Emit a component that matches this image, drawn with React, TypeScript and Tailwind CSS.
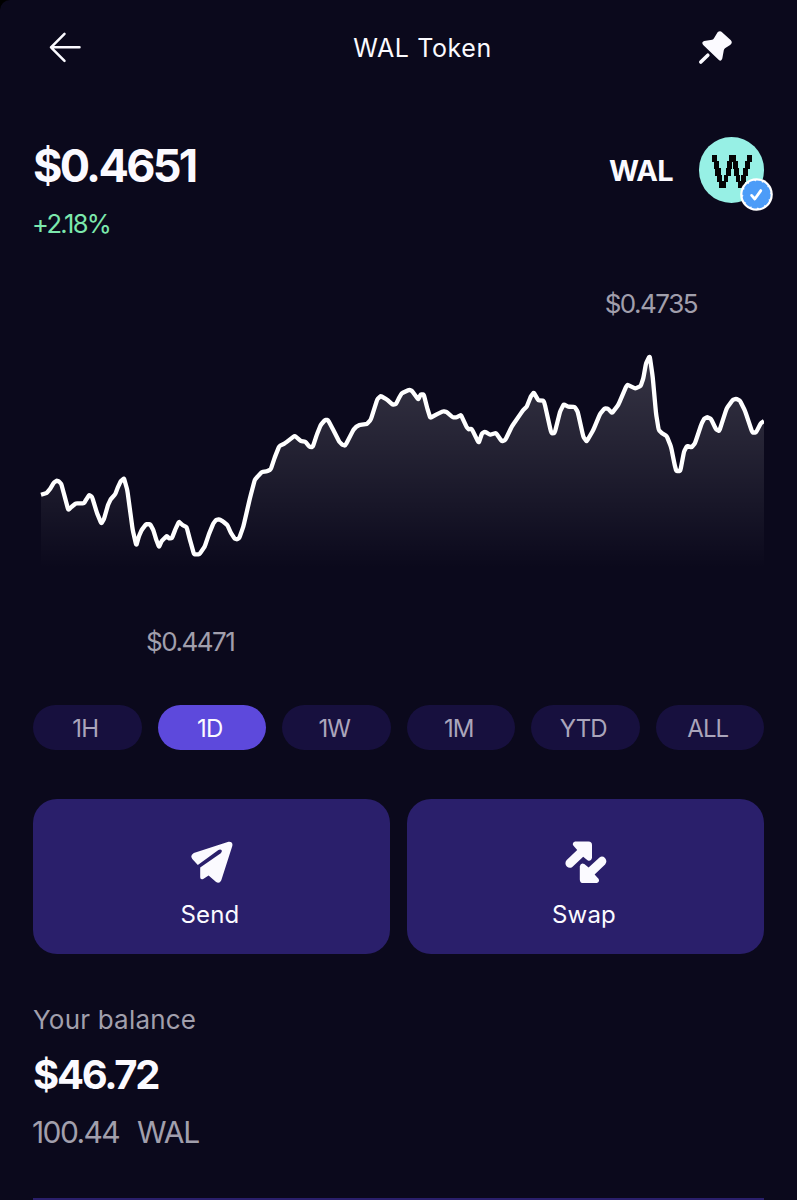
import { clsx } from "clsx";

type Point = [number, number];

const PRICES: Point[] = [
  [41, 494.7], [46.7, 493], [50, 489], [54, 482.5], [56.7, 480.7], [59, 481.5], [61.3, 484], [64, 494], [68.3, 510],
  [72, 506.5], [76, 503.3], [84, 503.3], [86.5, 499], [89.3, 495], [92, 496.7], [97, 513], [101.3, 523.5], [104, 519],
  [108, 505], [110.7, 499.3], [115.3, 494], [118, 487], [120.7, 481.3], [124, 478.3], [127.3, 490], [130, 510],
  [132.7, 530], [136.3, 545.5], [139, 536], [141.7, 530], [146, 524.3], [150, 524], [153.3, 530], [156, 539], [159, 547],
  [161.7, 541], [166.7, 536], [169.3, 538.5], [172, 538], [175.5, 529], [179, 521.7], [182.5, 525], [186.7, 527.3],
  [190, 540], [194, 554.3], [199.3, 554.3], [204.7, 546.7], [209, 534], [213.3, 523.5], [216, 520], [219.3, 519.3],
  [223, 521.5], [227.3, 525], [231, 533], [234.7, 538.7], [237, 539.3], [239.3, 538], [243.3, 526.7], [250, 498],
  [254.7, 480], [258, 476], [262, 472], [267, 471.3], [270.7, 469.5], [275, 456.7], [279.3, 446], [285, 443.3],
  [294.7, 435.7], [300.7, 441], [305.3, 441.7], [309.3, 446.7], [312.7, 447.3], [316.7, 435], [320.7, 425],
  [325, 420], [328, 420], [333.3, 430], [339.3, 441.7], [342, 444.5], [345.3, 445.7], [353.3, 430], [356, 427],
  [359.3, 425], [366.7, 424], [370.7, 420], [377.3, 399.3], [380.7, 396], [386.7, 399.3], [392.7, 404.7], [396, 404],
  [399, 398], [401.7, 393.3], [409.3, 389.7], [412, 391], [418.3, 399.5], [420.7, 394.3], [423.7, 394.3], [427.3, 408.3],
  [430.3, 418], [436.7, 414.3], [443.3, 411.2], [446.7, 412], [452.7, 417.3], [456.7, 417.3], [461, 415], [466.7, 427.3],
  [468.7, 429.3], [471.7, 428.7], [478.7, 443], [482, 433.3], [485, 431.7], [490, 434.7], [496, 433], [501.7, 441.3],
  [505.3, 440], [511.7, 426.7], [522.7, 410.7], [526.7, 406.7], [530.7, 396.7], [533.7, 392.5], [538.3, 400.3],
  [544, 400.7], [551.3, 433.5], [554.7, 433], [560, 411.7], [563.7, 404.3], [568.3, 406.7], [574.7, 407],
  [577.7, 411.7], [583.3, 436.7], [586.7, 441.5], [593.3, 430], [600, 414], [604.7, 408.3], [608, 408.7], [612, 413],
  [618.3, 405], [627, 384.5], [635.3, 388.5], [640.7, 386], [643.3, 378.3], [646, 363.3], [649.7, 356], [652.7, 376.7],
  [656, 413.3], [658.7, 430], [662, 433.3], [666.7, 436], [671, 446.7], [674.7, 465], [676.3, 471], [680.3, 471],
  [684, 451.7], [687, 446], [691.7, 447.3], [695, 443.3], [701.7, 423.3], [704, 419], [707.3, 417], [711, 419],
  [716, 429.3], [719.3, 431], [726.7, 408.3], [732.7, 400], [736, 398.7], [740, 400.7], [745, 410.7], [752.3, 432.5],
  [756, 432.5], [760.7, 423.3], [764, 421],
];

const RANGES = ["1H", "1D", "1W", "1M", "YTD", "ALL"];

// Rounds each corner slightly by curving through segment points near it.
function smoothPath(points: Point[]) {
  const cut = 0.15;
  let d = `M${points[0][0]} ${points[0][1]}`;
  for (let i = 1; i < points.length - 1; i++) {
    const [px, py] = points[i - 1];
    const [x, y] = points[i];
    const [nx, ny] = points[i + 1];
    d += `L${x + (px - x) * cut} ${y + (py - y) * cut}Q${x} ${y} ${x + (nx - x) * cut} ${y + (ny - y) * cut}`;
  }
  const [lx, ly] = points[points.length - 1];
  return `${d}L${lx} ${ly}`;
}

function PriceChart() {
  const line = smoothPath(PRICES);

  return (
    <svg className="block h-[240px] w-full" viewBox="33 340 731 240" fill="none">
      <defs>
        <linearGradient id="area" gradientUnits="userSpaceOnUse" x1="0" y1="356" x2="0" y2="568">
          <stop offset="0" stopColor="#fff" stopOpacity="0.18" />
          <stop offset="1" stopColor="#fff" stopOpacity="0" />
        </linearGradient>
      </defs>
      <path d={`${line}V568H41Z`} fill="url(#area)" />
      <path d={line} stroke="#fff" strokeWidth="4.3" strokeLinejoin="miter" />
    </svg>
  );
}

function BackIcon() {
  return (
    <svg className="h-8 w-8" viewBox="0 0 32 32" fill="none" stroke="#fbfaff" strokeWidth="2.5" strokeLinecap="round" strokeLinejoin="round">
      <path d="M30.5 15.3H2M15.5 1.8 2 15.3 15.5 28.8" />
    </svg>
  );
}

function PinIcon() {
  return (
    <svg className="h-9 w-9" viewBox="0 0 36 36" fill="#fbfaff">
      <path d="M19.6 2.2Q22 .2 24.3 2.4L32.6 10Q35.2 12.8 32.1 15L27 18.2Q26 19 25.8 20.2L24.3 28.5Q23.3 32 20.6 29.8L5.2 15.1Q3 12 6.2 10.9L14.2 9.8Q15.3 9.5 16 8.3Z" />
      <path d="m9.8 25.2-7 6.8" stroke="#fbfaff" strokeWidth="3.6" strokeLinecap="round" />
    </svg>
  );
}

function TokenLogo() {
  return (
    <div className="relative h-[66px] w-[65px] rounded-full bg-[#97f0e5]">
      {/* pixel-art mark, one row of blocks per line */}
      <svg className="h-full w-full" viewBox="699 137 65 66" fill="#050505" shapeRendering="crispEdges">
        <path d="M712 155h5v7h-5ZM729 155h7v7h-7ZM747 155h5v7h-5Z" />
        <path d="M714 161h5v8h-5ZM727 161h5v8h-5ZM733 161h5v8h-5ZM745 161h5v8h-5Z" />
        <path d="M715 168h6v8h-6ZM726 168h5v8h-5ZM734 168h5v8h-5ZM743 168h5v8h-5Z" />
        <path d="M717 175h5v7h-5ZM724 175h4v7h-4ZM736 175h4v7h-4ZM741 175h5v7h-5Z" />
        <path d="M719 181h7v7h-7ZM738 181h7v7h-7Z" />
      </svg>
      <svg className="absolute top-[41px] left-[41px] h-[33px] w-[33px]" viewBox="0 0 33 33" fill="none">
        <circle cx="16.5" cy="16.5" r="16.3" fill="#fff" />
        <circle cx="16.5" cy="16.5" r="12.8" fill="#4c9cf8" />
        <circle cx="16.5" cy="16.5" r="12.6" stroke="#4c9cf8" strokeWidth="3" strokeDasharray="3.6 3" strokeLinecap="round" />
        <path d="m11.6 17.4 3.2 3.6L20.8 12.6" stroke="#fff" strokeWidth="2.8" strokeLinecap="round" strokeLinejoin="round" />
      </svg>
    </div>
  );
}

function SendIcon() {
  return (
    <svg className="h-[42px] w-[42px]" viewBox="191 841 42 42" fill="#fbfaff">
      <path d="M228.5 841.7Q233.2 841.3 232.3 846L221.3 880.2Q219.3 884.3 215.8 881.8L208.6 875.4 203.2 879Q200.2 880 200.2 877.2V867.4L220.8 853.2Q222.8 850.8 221 849.8 220 849.2 218.4 850L197.8 865 192.3 859Q189.7 855.4 193.8 852.9Z" />
    </svg>
  );
}

function SwapIcon() {
  return (
    <svg className="h-[42px] w-[42px]" viewBox="565 841 42 42" fill="#fbfaff">
      <path d="M575 841.4H588.5Q592 841.4 592 845V858Q591 862 587.5 860.3L583.2 856.8 572.3 867Q569.5 868.9 566.8 866.5 564.1 863.2 566.7 860L577.2 850 573.3 845.6Q571.7 842.7 575 841.4Z" />
      <path d="M597 883H583.3Q579.8 883 579.8 879.4V866.3Q580.8 862.4 584.3 864.1L588.6 867.6 599.5 857.4Q602.3 855.5 605 857.9 607.7 861.2 605.1 864.4L594.6 874.4 598.5 878.8Q600.1 881.7 597 883Z" />
    </svg>
  );
}

export default function App() {
  return (
    <div className="h-[1200px] w-[797px] overflow-hidden bg-black font-['Inter',sans-serif] text-[#fbfaff]">
      <main className="flex h-full flex-col rounded-tl-[10px] bg-[#0b091c] px-[33px]">
        <header className="flex h-[95px] items-center justify-between pr-[30px] pl-4">
          <BackIcon />
          <h1 className="pt-px pl-[66px] text-[25px] leading-8 font-normal tracking-[0.6px]">WAL Token</h1>
          <PinIcon />
        </header>

        <section className="flex h-[150px] justify-between pt-[42px]">
          <div>
            <p className="text-[45px] leading-[58px] font-bold tracking-[-2.7px]">$0.4651</p>
            <p className="mt-[13px] -ml-px text-[25.5px] leading-8 font-normal tracking-[-1.6px] text-[#7ce8ad]">+2.18%</p>
          </div>
          <div className="flex h-[66px] items-center gap-[26px]">
            <span className="pt-px text-[29px] font-bold tracking-[-0.7px]">WAL</span>
            <TokenLogo />
          </div>
        </section>

        <section className="h-[460px] text-[26px] leading-8 font-normal tracking-[-1.5px] text-[#a19fac]">
          <p className="flex h-[95px] justify-end pt-[43px] pr-[67px]">$0.4735</p>
          <PriceChart />
          <p className="pt-[46px] pl-[113px]">$0.4471</p>
        </section>

        <nav className="flex gap-4">
          {RANGES.map((range) => (
            <button
              key={range}
              className={clsx(
                "flex h-[45px] flex-1 items-center justify-center rounded-full pt-[3px] pr-1 text-[24px] font-normal tracking-[-0.9px]",
                range === "1D" ? "bg-[#5d49dc] text-[#fbfaff]" : "bg-[#17103e] text-[#aaa5bb]",
              )}
            >
              {range}
            </button>
          ))}
        </nav>

        <div className="mt-[49px] flex gap-[17px] text-[24px] leading-8 font-normal tracking-[0.2px]">
          <button className="flex h-[155px] flex-1 flex-col items-center rounded-[24px] bg-[#2a1f6b] pt-[42px]">
            <SendIcon />
            <span className="mt-4 pr-[3px]">Send</span>
          </button>
          <button className="flex h-[155px] flex-1 flex-col items-center rounded-[24px] bg-[#2a1f6b] pt-[42px]">
            <SwapIcon />
            <span className="mt-4 pr-[3px]">Swap</span>
          </button>
        </div>

        <section className="mt-[50px] h-[194px]">
          <p className="text-[26px] leading-8 font-normal tracking-[0.2px] text-[#a19fac]">Your balance</p>
          <p className="mt-[13px] text-[40px] leading-[52px] font-bold tracking-[-2.3px]">$46.72</p>
          <p className="mt-[13px] -ml-px flex gap-[18px] text-[30px] leading-9 font-normal tracking-[-1.6px] text-[#a19fac]">
            <span>100.44</span>
            <span className="tracking-[-1.2px]">WAL</span>
          </p>
        </section>
        <div className="h-0.5 bg-[#2a1f6b]" />
      </main>
    </div>
  );
}
